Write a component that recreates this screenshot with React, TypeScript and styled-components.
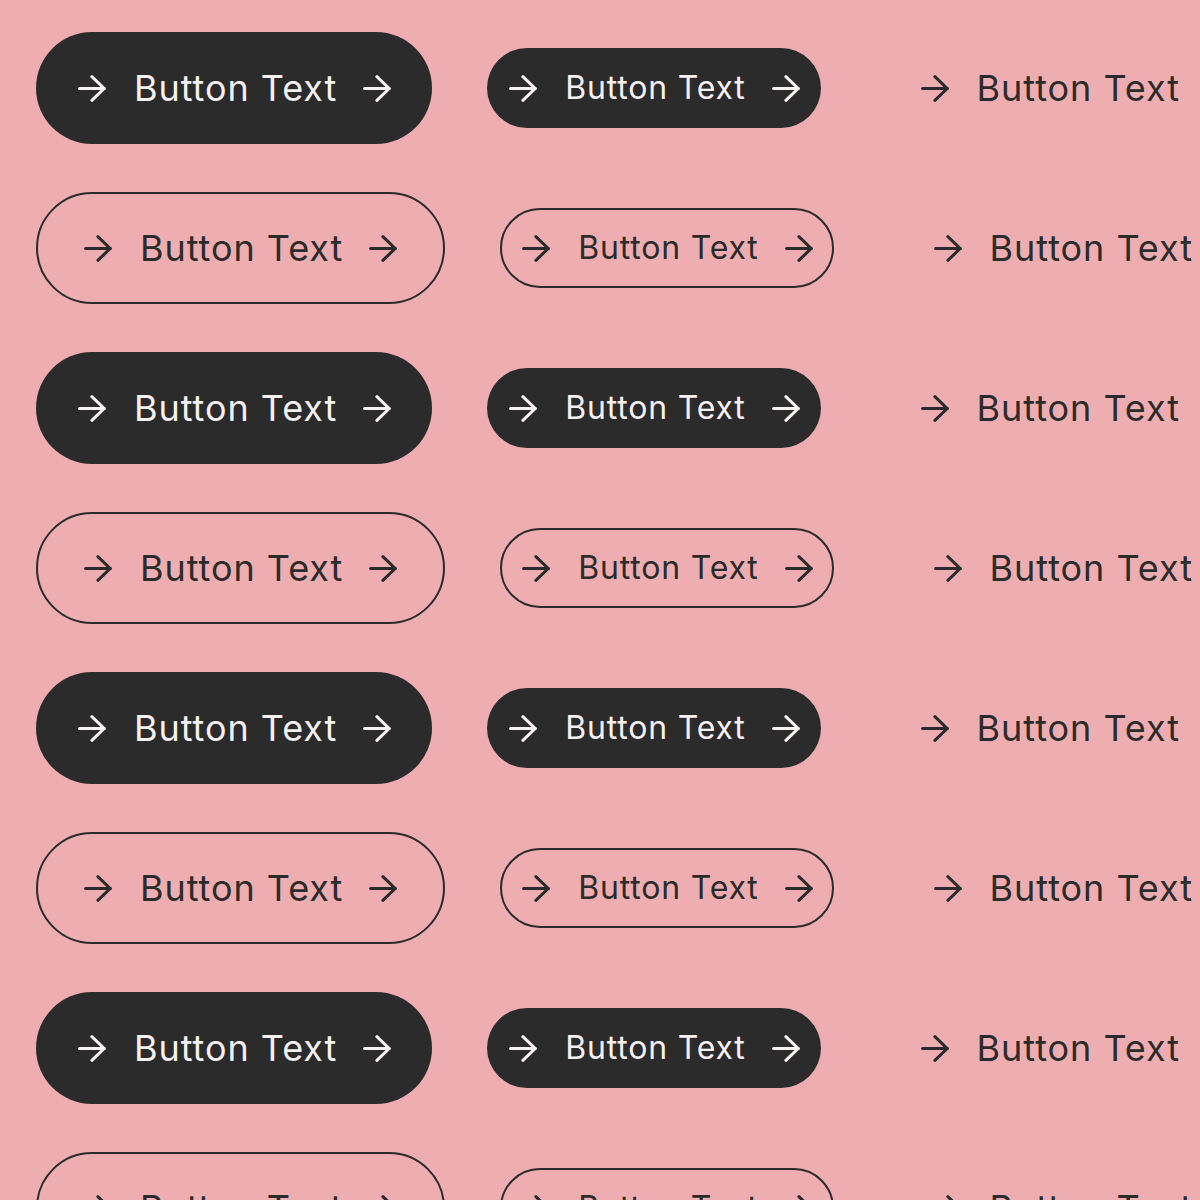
import React from 'react';
import styled, { createGlobalStyle, css } from 'styled-components';

const GlobalStyle = createGlobalStyle`
  html, body {
    margin: 0;
    padding: 0;
    background: #eeadb0;
  }
  body {
    font-family: Inter, "Noto Sans", sans-serif;
    overflow: hidden;
  }
`;

const Page = styled.div`
  display: flex;
  flex-direction: column;
  gap: 48px;
  padding: 32px 0 0 36px;
  height: 1200px;
  box-sizing: border-box;
  overflow: hidden;
`;

const Row = styled.div`
  display: flex;
  align-items: center;
  gap: 55px;
  height: 112px;
  flex-shrink: 0;
`;

type Variant = 'filled' | 'outline' | 'text';
type Size = 'large' | 'medium';

const Button = styled.button<{ $variant: Variant; $size: Size }>`
  display: inline-flex;
  align-items: center;
  flex-shrink: 0;
  box-sizing: border-box;
  margin: 0;
  border: none;
  border-radius: 999px;
  background: transparent;
  color: #2b2b2b;
  font-family: Inter, "Noto Sans", sans-serif;
  font-weight: 400;
  white-space: nowrap;
  cursor: pointer;

  ${(p) =>
    p.$size === 'large'
      ? css`
          height: 112px;
          font-size: 36px;
          letter-spacing: 0.95px;
          padding: 0 41px 0 42px;
        `
      : css`
          height: 80px;
          font-size: 32px;
          letter-spacing: 0.8px;
          padding: 0 21px 0 22px;
        `}

  ${(p) =>
    p.$variant === 'filled' &&
    css`
      background: #2b2b2b;
      color: #f6f0f0;
    `}

  ${(p) =>
    p.$variant === 'outline' &&
    css`
      border: 2px solid #2b2b2b;
      padding: ${p.$size === 'large' ? '0 46px' : '0 19px 0 20px'};
    `}

  ${(p) =>
    p.$variant === 'text' &&
    css`
      padding: 0 0 0 45px;
    `}
`;

const Label = styled.span`
  margin: 0 26px 0 28px;
  line-height: 1;
`;

const Arrow = () => (
  <svg width="28" height="27" viewBox="0 0 28 27" fill="none" stroke="currentColor" strokeWidth="3.1" strokeLinecap="round" strokeLinejoin="round">
    <path d="M1.6 13.5H26.2" />
    <path d="M13.9 1.7L26.2 13.5L13.9 25.3" />
  </svg>
);

const Item = ({ variant, size }: { variant: Variant; size: Size }) => (
  <Button $variant={variant} $size={size}>
    <Arrow />
    <Label>Button Text</Label>
    {variant !== 'text' && <Arrow />}
  </Button>
);

export default function App() {
  const rows: Variant[] = ['filled', 'outline', 'filled', 'outline', 'filled', 'outline', 'filled', 'outline'];
  return (
    <>
      <GlobalStyle />
      <Page>
        {rows.map((v, i) => (
          <Row key={i}>
            <Item variant={v} size="large" />
            <Item variant={v} size="medium" />
            <Item variant="text" size="large" />
          </Row>
        ))}
      </Page>
    </>
  );
}
